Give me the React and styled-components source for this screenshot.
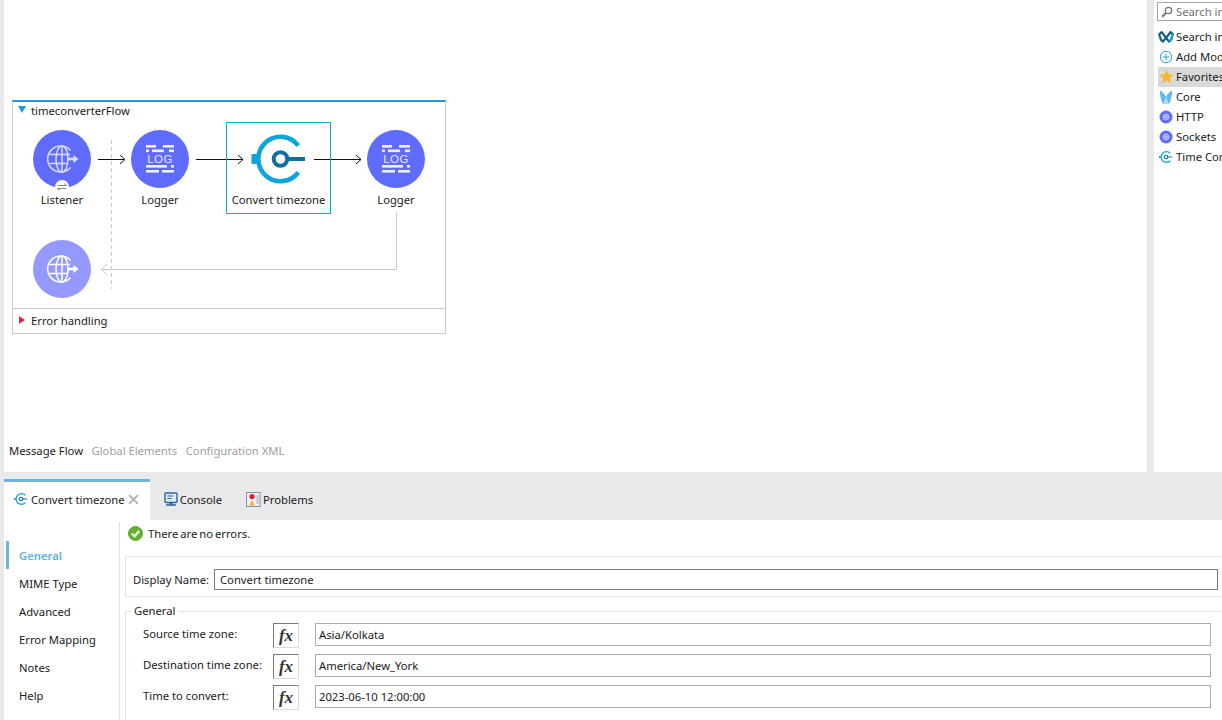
import React from "react";
import styled, { createGlobalStyle } from "styled-components";

const FONT = `"Noto Sans", "Open Sans", sans-serif`;

const GlobalStyle = createGlobalStyle`
  html, body {
    margin: 0;
    padding: 0;
    background: #e8e9eb;
  }
  * {
    box-sizing: border-box;
  }
  svg {
    flex: none;
  }
`;

function GlobeGlyph({ color }) {
  return (
    <g fill="none" stroke={color} strokeWidth="1.5">
      <path d="M37.5 20.5A13 13 0 1 0 37.5 37.5" />
      <ellipse cx="29" cy="29" rx="6" ry="13" />
      <path d="M16.5 24.5H37M16.5 33.5H35M29 16V42" />
      <path d="M34 29H41" strokeWidth="2.6" />
      <path d="M40.5 25L45.5 29L40.5 33Z" fill={color} stroke="none" />
    </g>
  );
}

function GlobeNodeIcon({ bg, color, badge }) {
  return (
    <svg width="58" height="58" viewBox="0 0 58 58" style={{ overflow: "visible" }}>
      <circle cx="29" cy="29" r="29" fill={bg} />
      <GlobeGlyph color={color} />
      {badge && (
        <g>
          <circle cx="29" cy="57" r="7" fill="#fff" />
          <path
            d="M24.5 55.5H33.5L31 53.5M33.5 58.5H24.5L27 60.5"
            fill="none"
            stroke="#8c8c8c"
            strokeWidth="1"
          />
        </g>
      )}
    </svg>
  );
}

function LoggerIcon() {
  const bars = [
    [15, 15, 10], [32, 15, 11],
    [15, 19.5, 3], [21, 19.5, 12], [38, 19.5, 5],
    [15, 35, 21], [40, 35, 3],
    [15, 40, 13], [31, 40, 12],
  ];
  return (
    <svg width="58" height="58" viewBox="0 0 58 58">
      <circle cx="29" cy="29" r="29" fill="#5f6cff" />
      {bars.map(([x, y, w], i) => (
        <rect key={i} x={x} y={y} width={w} height="2.6" fill="#eef0ff" />
      ))}
      <text
        x="29"
        y="33"
        textAnchor="middle"
        fontFamily="'Liberation Sans', sans-serif"
        fontSize="11.5"
        letterSpacing="0.4"
        fill="#e6e8ff"
      >
        LOG
      </text>
    </svg>
  );
}

function ConvertIcon() {
  return (
    <svg width="58" height="58" viewBox="0 0 58 58">
      <path d="M48.3 15.7A22.2 22.2 0 1 0 48.3 42.3" fill="none" stroke="#0ea5dd" strokeWidth="4.6" />
      <rect x="1.5" y="24" width="6" height="10" fill="#0ea5dd" />
      <circle cx="30.5" cy="29" r="6.8" fill="none" stroke="#0f6f9c" strokeWidth="4" />
      <rect x="37" y="27" width="18" height="4" fill="#0f6f9c" />
    </svg>
  );
}

function SmallTimeIcon() {
  return (
    <svg width="14" height="14" viewBox="0 0 14 14">
      <path d="M11.3 3.2A5.4 5.4 0 1 0 11.3 10.8" fill="none" stroke="#0ea5dd" strokeWidth="1.3" />
      <rect x="0" y="6" width="1.6" height="2" fill="#0ea5dd" />
      <circle cx="7" cy="7" r="1.7" fill="none" stroke="#0f6f9c" strokeWidth="1.1" />
      <rect x="8.6" y="6.5" width="4.6" height="1" fill="#0f6f9c" />
    </svg>
  );
}

function ExchangeIcon() {
  return (
    <svg width="16" height="14" viewBox="0 0 16 14">
      <path d="M1.2 4.2L3.6 2L11 11.6L13.2 9.6L14.8 4L12.6 2L5 11.6L2.8 9.6Z" fill="none" stroke="#0f5c85" strokeWidth="2.1" strokeLinejoin="round" />
      <path d="M11 11.6L13.2 9.6L14.8 4" fill="none" stroke="#1da0d8" strokeWidth="2.1" />
    </svg>
  );
}

function PlusIcon() {
  return (
    <svg width="14" height="14" viewBox="0 0 14 14">
      <circle cx="7" cy="7" r="5.7" fill="#fff" stroke="#2f9fd8" strokeWidth="1" />
      <path d="M7 3.5V10.5M3.5 7H10.5" stroke="#2f9fd8" strokeWidth="1" />
    </svg>
  );
}

function StarIcon() {
  return (
    <svg width="15" height="15" viewBox="0 0 15 15">
      <path d="M7.5 .6L9.6 5.4L14.6 5.8L10.8 9.1L12 14.2L7.5 11.5L3 14.2L4.2 9.1L.4 5.8L5.4 5.4Z" fill="#f6b52a" />
    </svg>
  );
}

function CoreIcon() {
  return (
    <svg width="14" height="14" viewBox="0 0 14 14">
      <path d="M1 .5C3.5 2 6 4 7 7C8 4 10.5 2 13 .5C13.5 5 12 9 10.5 13.5H3.5C2 9 .5 5 1 .5Z" fill="#5fb9ea" />
      <path d="M4.5 13.5C5 11 6 9 7 7C8 9 9 11 9.5 13.5Z" fill="#a8def7" />
    </svg>
  );
}

function ConnectorIcon() {
  return (
    <svg width="14" height="14" viewBox="0 0 14 14">
      <circle cx="7" cy="7" r="6.5" fill="#5f6cff" />
      <circle cx="7" cy="7" r="3" fill="#8f97ff" stroke="#c9cdff" strokeWidth="0.8" />
      <path d="M4 7H10M7 4V10" stroke="#c9cdff" strokeWidth="0.7" />
    </svg>
  );
}

function SearchIcon() {
  return (
    <svg width="12" height="12" viewBox="0 0 12 12">
      <circle cx="7.5" cy="4.5" r="3.2" fill="none" stroke="#777" strokeWidth="1.3" />
      <path d="M5 7L1.2 10.8" stroke="#777" strokeWidth="2" />
    </svg>
  );
}

function ConsoleIcon() {
  return (
    <svg width="14" height="14" viewBox="0 0 14 14">
      <rect x="1" y="1" width="12" height="9.5" rx="1" fill="#dbe8f5" stroke="#2d659f" strokeWidth="1.4" />
      <path d="M3.5 4H9M3.5 6.5H7.5" stroke="#2d659f" strokeWidth="1" />
      <path d="M2 13H12M5.5 11.5H8.5" stroke="#2d659f" strokeWidth="1.4" />
    </svg>
  );
}

function ProblemsIcon() {
  return (
    <svg width="15" height="15" viewBox="0 0 15 15">
      <rect x=".5" y=".5" width="13.5" height="14" fill="#eef0f4" stroke="#8a8fa3" />
      <circle cx="6" cy="4.6" r="2.6" fill="#d3232f" />
      <path d="M6 8L9 13.5H3Z" fill="#f4b63a" />
      <rect x="10.5" y="3" width="2" height="9" fill="#b9c7dd" />
    </svg>
  );
}

function CloseIcon() {
  return (
    <svg width="11" height="11" viewBox="0 0 10 10">
      <path d="M1 1L9 9M9 1L1 9" stroke="#b0b0b0" strokeWidth="1.7" />
    </svg>
  );
}

function OkIcon() {
  return (
    <svg width="15" height="15" viewBox="0 0 15 15">
      <circle cx="7.5" cy="7.5" r="7" fill="#66b32e" stroke="#4c8f22" strokeWidth="0.8" />
      <path d="M3.8 7.6L6.5 10.2L11.2 5" fill="none" stroke="#fff" strokeWidth="2" />
    </svg>
  );
}

function Connectors() {
  return (
    <Wires viewBox="12 100 434 208" width="434" height="208">
      <g fill="none" stroke="#c8c8c8">
        <path d="M111.5 140V289" strokeDasharray="4 3" />
        <path d="M396.5 212V269.5H101" />
        <path d="M107 264L101 269.5L107 275" />
      </g>
      <g fill="none" stroke="#111">
        <path d="M98 159.5H124M120 155L125 159.5L120 164" />
        <path d="M196 159.5H243M238 155L243 159.5L238 164" />
        <path d="M314 159.5H361M356 155L361 159.5L356 164" />
      </g>
    </Wires>
  );
}

const PALETTE = [
  { label: "Search in Exchange...", icon: <ExchangeIcon /> },
  { label: "Add Modules...", icon: <PlusIcon /> },
  { label: "Favorites", icon: <StarIcon />, active: true },
  { label: "Core", icon: <CoreIcon /> },
  { label: "HTTP", icon: <ConnectorIcon /> },
  { label: "Sockets", icon: <ConnectorIcon /> },
  { label: "Time Converter", icon: <SmallTimeIcon /> },
];

const SECTIONS = ["General", "MIME Type", "Advanced", "Error Mapping", "Notes", "Help"];

const FIELDS = [
  { label: "Source time zone:", value: "Asia/Kolkata" },
  { label: "Destination time zone:", value: "America/New_York" },
  { label: "Time to convert:", value: "2023-06-10 12:00:00" },
];

export default function App() {
  return (
    <Page>
      <GlobalStyle />
      <TopArea>
        <Canvas>
          <FlowBox>
            <FlowTitle>
              <Caret $color="#2196e3" $down />
              timeconverterFlow
            </FlowTitle>
            <Diagram>
              <Connectors />
              <Node $x={-3.5} $y={22}>
                <GlobeNodeIcon bg="#5f6cff" color="#d9dcff" badge />
                <NodeLabel>Listener</NodeLabel>
              </Node>
              <Node $x={94.5} $y={22}>
                <LoggerIcon />
                <NodeLabel>Logger</NodeLabel>
              </Node>
              <Node $x={213} $y={22} $selected>
                <ConvertIcon />
                <NodeLabel>Convert timezone</NodeLabel>
              </Node>
              <Node $x={330.5} $y={22}>
                <LoggerIcon />
                <NodeLabel>Logger</NodeLabel>
              </Node>
              <Node $x={-3.5} $y={132}>
                <GlobeNodeIcon bg="#9499ff" color="#ffffff" />
              </Node>
            </Diagram>
            <ErrorRow>
              <Caret $color="#d8294f" />
              Error handling
            </ErrorRow>
          </FlowBox>
          <ViewTabs>
            <ViewTab $active>Message Flow</ViewTab>
            <ViewTab>Global Elements</ViewTab>
            <ViewTab>Configuration XML</ViewTab>
          </ViewTabs>
        </Canvas>
        <Palette>
          <PaletteSearch>
            <SearchIcon />
            <span>Search in Palette</span>
          </PaletteSearch>
          <PaletteList>
            {PALETTE.map((item) => (
              <PaletteRow key={item.label} $active={item.active}>
                <PaletteIcon>{item.icon}</PaletteIcon>
                {item.label}
              </PaletteRow>
            ))}
          </PaletteList>
        </Palette>
      </TopArea>

      <EditorTabs>
        <EditorTab $active>
          <SmallTimeIcon />
          <TabText>Convert timezone</TabText>
          <CloseIcon />
        </EditorTab>
        <EditorTab>
          <ConsoleIcon />
          <TabText>Console</TabText>
        </EditorTab>
        <EditorTab>
          <ProblemsIcon />
          <TabText>Problems</TabText>
        </EditorTab>
      </EditorTabs>

      <Properties>
        <Sidebar>
          {SECTIONS.map((name, i) => (
            <SideItem key={name} $active={i === 0}>
              {name}
            </SideItem>
          ))}
        </Sidebar>
        <Form>
          <Status>
            <OkIcon />
            There are no errors.
          </Status>
          <NameGroup>
            <NameLabel>Display Name:</NameLabel>
            <NameInput readOnly value="Convert timezone" />
          </NameGroup>
          <FieldGroup>
            <GroupLegend>General</GroupLegend>
            {FIELDS.map((field) => (
              <FieldRow key={field.label}>
                <FieldLabel>{field.label}</FieldLabel>
                <FxButton>fx</FxButton>
                <FieldInput readOnly value={field.value} />
              </FieldRow>
            ))}
          </FieldGroup>
        </Form>
      </Properties>
    </Page>
  );
}

const Page = styled.div`
  width: 1222px;
  height: 720px;
  overflow: hidden;
  background: #e8e9eb;
  font-family: ${FONT};
  font-size: 11.25px;
  color: #1a1a1a;
`;

const TopArea = styled.div`
  display: flex;
  height: 472px;
  padding-left: 4px;
  gap: 7px;
`;

const Canvas = styled.div`
  display: flex;
  flex-direction: column;
  justify-content: space-between;
  width: 1143px;
  padding: 100px 0 13px 5px;
  background: #fff;
`;

const FlowBox = styled.div`
  width: 434px;
  height: 234px;
  margin-left: 3px;
  display: flex;
  flex-direction: column;
  border: 1px solid #c9c9c9;
  border-top: 2px solid #2196e3;
`;

const FlowTitle = styled.div`
  display: flex;
  align-items: center;
  gap: 5px;
  height: 18px;
  padding-left: 5px;
  line-height: 18px;
`;

const Caret = styled.span`
  width: 0;
  height: 0;
  ${(props) =>
    props.$down
      ? `border-left: 4px solid transparent;
         border-right: 4px solid transparent;
         border-top: 7px solid ${props.$color};
         margin-bottom: 3px;`
      : `border-top: 4px solid transparent;
         border-bottom: 4px solid transparent;
         border-left: 6px solid ${props.$color};
         margin: 0 1px 0 1px;`}
`;

const Diagram = styled.div`
  position: relative;
  flex: 1;
  margin-top: -18px;
`;

const Wires = styled.svg`
  position: absolute;
  left: -1px;
  top: -2px;
`;

const Node = styled.div`
  position: absolute;
  left: ${(props) => props.$x}px;
  top: ${(props) => props.$y - 2}px;
  width: 105px;
  height: 92px;
  padding-top: 7px;
  display: flex;
  flex-direction: column;
  align-items: center;
  border: 1px solid ${(props) => (props.$selected ? "#00b4d2" : "transparent")};
`;

const NodeLabel = styled.div`
  margin-top: 3px;
  line-height: 18px;
  white-space: nowrap;
`;

const ErrorRow = styled.div`
  display: flex;
  align-items: center;
  gap: 5px;
  height: 25px;
  padding: 0 0 2px 5px;
  border-top: 1px solid #c9c9c9;
`;

const ViewTabs = styled.div`
  display: flex;
  gap: 8.5px;
  line-height: 16px;
`;

const ViewTab = styled.span`
  color: ${(props) => (props.$active ? "#1a1a1a" : "#a0a0a0")};
`;

const Palette = styled.div`
  flex: 1;
  min-width: 0;
  overflow: hidden;
  background: #fff;
  padding: 2px 0 0 3px;
`;

const PaletteSearch = styled.div`
  display: flex;
  align-items: center;
  gap: 3px;
  width: 90px;
  height: 19px;
  padding-left: 3px;
  border: 1px solid #a6a6a6;
  color: #707070;
  white-space: nowrap;
`;

const PaletteList = styled.div`
  margin-top: 6px;
  margin-left: 1px;
`;

const PaletteRow = styled.div`
  display: flex;
  align-items: center;
  height: 20px;
  padding-bottom: 1px;
  white-space: nowrap;
  background: ${(props) => (props.$active ? "#d9d9d9" : "transparent")};
`;

const PaletteIcon = styled.span`
  display: flex;
  justify-content: center;
  flex: none;
  width: 16px;
  margin-right: 2px;
`;

const EditorTabs = styled.div`
  display: flex;
  align-items: flex-end;
  height: 48px;
  padding-left: 4px;
`;

const EditorTab = styled.div`
  display: flex;
  align-items: center;
  height: 41px;
  gap: ${(props) => (props.$active ? "3px" : "2px")};
  padding: 0 ${(props) => (props.$active ? "11px" : "10px")} 4px ${(props) => (props.$active ? "10px" : "14px")};
  background: ${(props) => (props.$active ? "#fff" : "transparent")};
  border-top: 3px solid ${(props) => (props.$active ? "#6cb4dc" : "transparent")};
`;

const TabText = styled.span`
  white-space: nowrap;
`;

const Properties = styled.div`
  display: flex;
  height: 200px;
  margin-left: 4px;
  background: #fff;
`;

const Sidebar = styled.div`
  flex: none;
  width: 116px;
  margin-top: 2px;
  padding-top: 19px;
  border-right: 1px solid #e2e2e2;
`;

const SideItem = styled.div`
  display: flex;
  align-items: center;
  height: 28px;
  margin-left: 2px;
  padding-left: 10px;
  border-left: 3px solid ${(props) => (props.$active ? "#6cb4dc" : "transparent")};
  color: ${(props) => (props.$active ? "#5fb0de" : "#1a1a1a")};
  font-weight: ${(props) => (props.$active ? 600 : 400)};
`;

const Form = styled.div`
  flex: 1;
  min-width: 0;
  overflow: hidden;
  padding: 5px 0 0 5px;
`;

const Status = styled.div`
  display: flex;
  align-items: center;
  gap: 5px;
  height: 16px;
  padding-left: 3px;
  word-spacing: -1px;
`;

const NameGroup = styled.div`
  display: flex;
  align-items: flex-start;
  height: 41px;
  margin: 15px -11px 0 0;
  padding: 12px 14px 0 7px;
  border: 1px solid #e2e2e2;
`;

const NameLabel = styled.label`
  flex: none;
  width: 81px;
  line-height: 21px;
  white-space: nowrap;
`;

const NameInput = styled.input`
  flex: 1;
  min-width: 0;
  height: 21px;
  padding: 0 5px;
  border: 1px solid #7a7a7a;
  outline: none;
  font: inherit;
  color: inherit;
`;

const FieldGroup = styled.fieldset`
  display: flex;
  flex-direction: column;
  gap: 6px;
  margin: 6px -11px 0 0;
  padding: 4px 21px 0 17px;
  border: 1px solid #e2e2e2;
  height: 140px;
`;

const GroupLegend = styled.legend`
  margin-left: -12px;
  padding: 0 3px;
  line-height: 16px;
`;

const FieldRow = styled.div`
  display: grid;
  grid-template-columns: 130px 26px 1fr;
  align-items: start;
`;

const FieldLabel = styled.label`
  line-height: 21px;
  white-space: nowrap;
`;

const FxButton = styled.div`
  display: flex;
  align-items: center;
  justify-content: center;
  height: 25px;
  border: 1px solid #dcdcdc;
  border-top: 1px solid #7a7a7a;
  border-left: 1px solid #7a7a7a;
  color: #333;
  font-family: "Liberation Serif", serif;
  font-style: italic;
  font-weight: 700;
  font-size: 17px;
`;

const FieldInput = styled.input`
  width: calc(100% - 16px);
  margin-left: 16px;
  height: 23px;
  padding: 0 3px;
  border: 1px solid #ababab;
  outline: none;
  font: inherit;
  color: inherit;
`;
